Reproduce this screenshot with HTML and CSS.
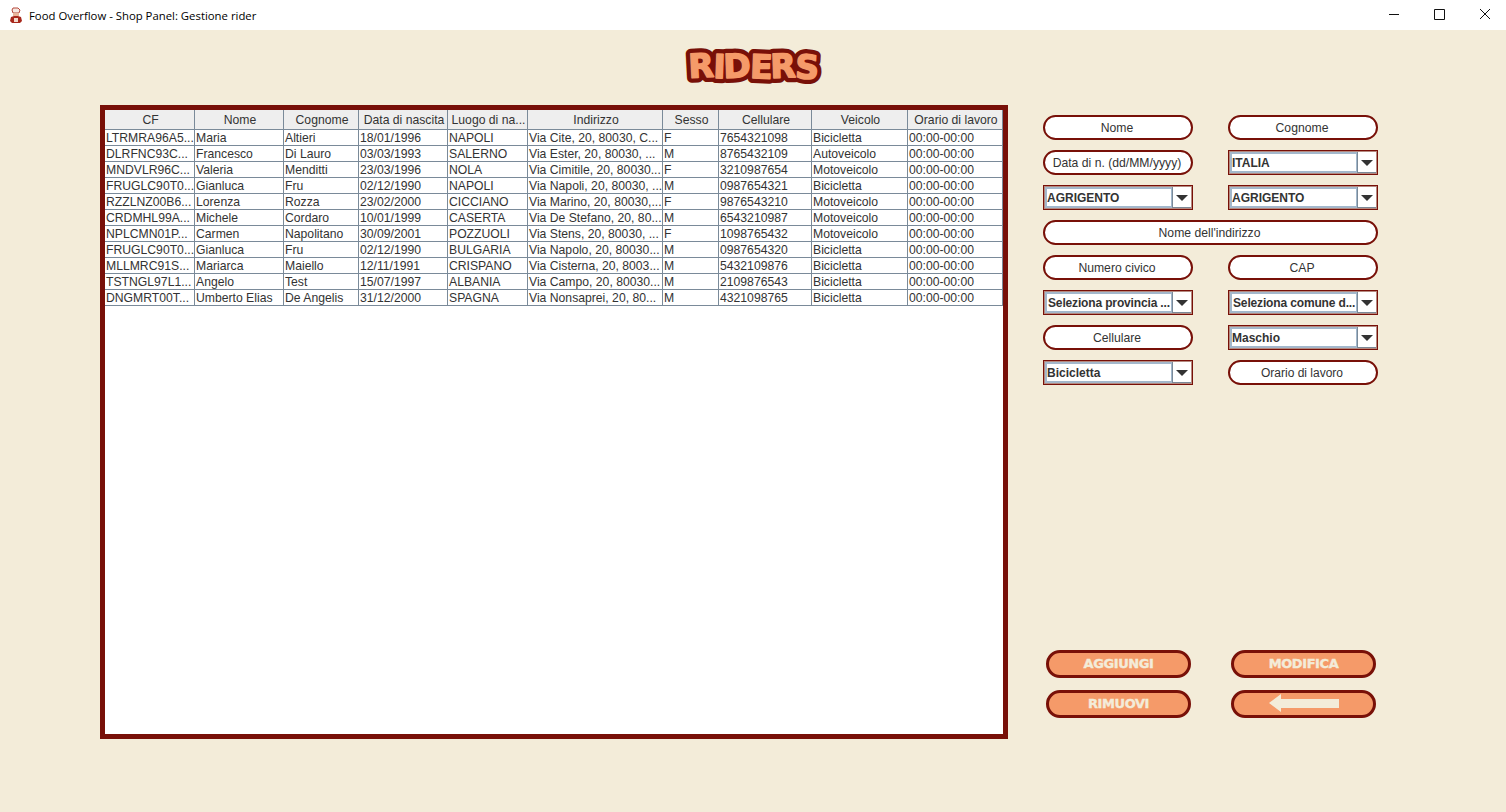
FILE: index.html
```html
<!DOCTYPE html>
<html lang="en">
<head>
    <meta charset="UTF-8">
    <title>Food Overflow - Shop Panel: Gestione rider</title>
    <link rel="stylesheet" href="styles.css">
</head>
<body>
<div class="titlebar">
    <svg class="app-icon" width="14" height="17" viewBox="0 0 14 17">
        <path d="M4 1h5l2 2-1 3H4L3 3z" fill="#f6e8e2" stroke="#b5483a" stroke-width="1"/>
        <path d="M4 6h6v3H4z" fill="#e9b59a"/>
        <path d="M2 10l3-1h4l3 1 1 4-2 2H3l-2-2z" fill="#a8281c"/>
        <path d="M5 11h4v4H5z" fill="#f2d9cc"/>
    </svg>
    <span class="app-title">Food Overflow - Shop Panel: Gestione rider</span>
    <div class="win-buttons">
        <svg width="46" height="30" viewBox="0 0 46 30"><path d="M21 14.500h10" stroke="#111" fill="none"/></svg>
        <svg width="46" height="30" viewBox="0 0 46 30"><path d="M20.500 9.500h10v10h-10z" stroke="#111" fill="none"/></svg>
        <svg width="46" height="30" viewBox="0 0 46 30"><path d="M20 9l10 10M30 9L20 19" stroke="#111" fill="none"/></svg>
    </div>
</div>

<div class="page">
    <div class="logo">
        <svg width="140" height="44" viewBox="0 0 140 44">
            <defs>
                <text id="logo-text" x="70" y="34" text-anchor="middle" rotate="-3 2 -2 2 -2 3">RIDERS</text>
            </defs>
            <use href="#logo-text" class="logo-back"/>
            <use href="#logo-text" class="logo-front"/>
        </svg>
    </div>
    <div class="main">
        <div class="table-panel">
            <table class="riders">
                <colgroup>
                    <col class="c-cf"><col class="c-nome"><col class="c-cognome"><col class="c-data"><col class="c-luogo">
                    <col class="c-ind"><col class="c-sesso"><col class="c-cell"><col class="c-veicolo"><col class="c-orario">
                </colgroup>
                <thead>
                <tr><th>CF</th><th>Nome</th><th>Cognome</th><th>Data di nascita</th><th>Luogo di na...</th><th>Indirizzo</th><th>Sesso</th><th>Cellulare</th><th>Veicolo</th><th>Orario di lavoro</th></tr>
                </thead>
                <tbody>
                <tr><td>LTRMRA96A5...</td><td>Maria</td><td>Altieri</td><td>18/01/1996</td><td>NAPOLI</td><td>Via Cite, 20, 80030, C...</td><td>F</td><td>7654321098</td><td>Bicicletta</td><td>00:00-00:00</td></tr>
                <tr><td>DLRFNC93C...</td><td>Francesco</td><td>Di Lauro</td><td>03/03/1993</td><td>SALERNO</td><td>Via Ester, 20, 80030, ...</td><td>M</td><td>8765432109</td><td>Autoveicolo</td><td>00:00-00:00</td></tr>
                <tr><td>MNDVLR96C...</td><td>Valeria</td><td>Menditti</td><td>23/03/1996</td><td>NOLA</td><td>Via Cimitile, 20, 80030...</td><td>F</td><td>3210987654</td><td>Motoveicolo</td><td>00:00-00:00</td></tr>
                <tr><td>FRUGLC90T0...</td><td>Gianluca</td><td>Fru</td><td>02/12/1990</td><td>NAPOLI</td><td>Via Napoli, 20, 80030, ...</td><td>M</td><td>0987654321</td><td>Bicicletta</td><td>00:00-00:00</td></tr>
                <tr><td>RZZLNZ00B6...</td><td>Lorenza</td><td>Rozza</td><td>23/02/2000</td><td>CICCIANO</td><td>Via Marino, 20, 80030,...</td><td>F</td><td>9876543210</td><td>Motoveicolo</td><td>00:00-00:00</td></tr>
                <tr><td>CRDMHL99A...</td><td>Michele</td><td>Cordaro</td><td>10/01/1999</td><td>CASERTA</td><td>Via De Stefano, 20, 80...</td><td>M</td><td>6543210987</td><td>Motoveicolo</td><td>00:00-00:00</td></tr>
                <tr><td>NPLCMN01P...</td><td>Carmen</td><td>Napolitano</td><td>30/09/2001</td><td>POZZUOLI</td><td>Via Stens, 20, 80030, ...</td><td>F</td><td>1098765432</td><td>Motoveicolo</td><td>00:00-00:00</td></tr>
                <tr><td>FRUGLC90T0...</td><td>Gianluca</td><td>Fru</td><td>02/12/1990</td><td>BULGARIA</td><td>Via Napolo, 20, 80030...</td><td>M</td><td>0987654320</td><td>Bicicletta</td><td>00:00-00:00</td></tr>
                <tr><td>MLLMRC91S...</td><td>Mariarca</td><td>Maiello</td><td>12/11/1991</td><td>CRISPANO</td><td>Via Cisterna, 20, 8003...</td><td>M</td><td>5432109876</td><td>Bicicletta</td><td>00:00-00:00</td></tr>
                <tr><td>TSTNGL97L1...</td><td>Angelo</td><td>Test</td><td>15/07/1997</td><td>ALBANIA</td><td>Via Campo, 20, 80030...</td><td>M</td><td>2109876543</td><td>Bicicletta</td><td>00:00-00:00</td></tr>
                <tr><td>DNGMRT00T...</td><td>Umberto Elias</td><td>De Angelis</td><td>31/12/2000</td><td>SPAGNA</td><td>Via Nonsaprei, 20, 80...</td><td>M</td><td>4321098765</td><td>Bicicletta</td><td>00:00-00:00</td></tr>
                </tbody>
            </table>
        </div>

        <div class="side">
            <div class="form">
                <div class="field">Nome</div>
                <div class="field">Cognome</div>
                <div class="field">Data di n. (dd/MM/yyyy)</div>
                <div class="combo"><span class="combo-val">ITALIA</span><span class="combo-btn"></span></div>
                <div class="combo"><span class="combo-val">AGRIGENTO</span><span class="combo-btn"></span></div>
                <div class="combo"><span class="combo-val">AGRIGENTO</span><span class="combo-btn"></span></div>
                <div class="field wide">Nome dell'indirizzo</div>
                <div class="field">Numero civico</div>
                <div class="field">CAP</div>
                <div class="combo"><span class="combo-val sel">Seleziona provincia ...</span><span class="combo-btn"></span></div>
                <div class="combo"><span class="combo-val sel">Seleziona comune d...</span><span class="combo-btn"></span></div>
                <div class="field">Cellulare</div>
                <div class="combo"><span class="combo-val">Maschio</span><span class="combo-btn"></span></div>
                <div class="combo"><span class="combo-val">Bicicletta</span><span class="combo-btn"></span></div>
                <div class="field small">Orario di lavoro</div>
            </div>
            <div class="actions">
                <button class="btn">AGGIUNGI</button>
                <button class="btn">MODIFICA</button>
                <button class="btn">RIMUOVI</button>
                <button class="btn">
                    <svg width="70" height="20" viewBox="0 0 70 20"><path d="M0 10l12-9v5h58v9H12v4z" fill="#f3ecd9"/></svg>
                </button>
            </div>
        </div>
    </div>
</div>
</body>
</html>
```

FILE: styles.css
```css
*{
    margin: 0;
    padding: 0;
    box-sizing: border-box;
}
html,body{
    height: 100%;
}
body{
    background: #f3ecd9;
    font-family: "Liberation Sans", Arial, sans-serif;
    font-size: 12.2px;
    color: #333333;
    overflow: hidden;
}
/* title bar */
.titlebar{
    height: 30px;
    background: #ffffff;
    display: flex;
    align-items: center;
    padding-left: 9px;
}
.app-title{
    margin-left: 6px;
    font-family: "Open Sans", "Noto Sans", sans-serif;
    font-size: 11.35px;
    color: #000000;
}
.win-buttons{
    margin-left: auto;
    display: flex;
}
.win-buttons svg{
    display: block;
}
/* page */
.page{
    padding: 0 100px;
}
.logo{
    height: 75px;
    padding-top: 14px;
    display: flex;
    justify-content: center;
}
.logo svg{
    display: block;
}
.logo text{
    font-family: "DejaVu Sans", sans-serif;
    font-size: 33px;
    font-weight: bold;
    letter-spacing: -1.5px;
}
.logo-back{
    fill: #781008;
    stroke: #781008;
    stroke-width: 10px;
    stroke-linejoin: round;
}
.logo-front{
    fill: #f59a69;
    stroke: #f59a69;
    stroke-width: 1.5px;
    stroke-linejoin: round;
}
.main{
    display: flex;
    gap: 35px;
}
.table-panel{
    width: 908px;
    height: 634px;
    border: 5px solid #781008;
    background: #ffffff;
}
/* table */
.riders{
    table-layout: fixed;
    border-collapse: separate;
    border-spacing: 0;
    width: 898px;
}
.c-cf{width: 90px;}
.c-nome{width: 89px;}
.c-cognome{width: 75px;}
.c-data{width: 89px;}
.c-luogo{width: 80px;}
.c-ind{width: 135px;}
.c-sesso{width: 56px;}
.c-cell{width: 93px;}
.c-veicolo{width: 96px;}
.c-orario{width: 95px;}
.riders th{
    height: 20px;
    background: #eeeeee;
    font-weight: normal;
    text-align: center;
    padding: 2px 0 0 2px;
    line-height: 17px;
    border-right: 1px solid #7a8a99;
    border-bottom: 1px solid #7a8a99;
    white-space: nowrap;
    overflow: hidden;
}
.riders td{
    height: 16px;
    padding: 2px 0 0 1px;
    line-height: 13px;
    border-right: 1px solid #7a8a99;
    border-bottom: 1px solid #7a8a99;
    white-space: nowrap;
    overflow: hidden;
}
/* right column */
.side{
    width: 335px;
    height: 634px;
    display: flex;
    flex-direction: column;
    justify-content: space-between;
    padding-top: 10px;
    padding-bottom: 21px;
}
.form{
    display: grid;
    grid-template-columns: 150px 150px;
    grid-auto-rows: 25px;
    column-gap: 35px;
    row-gap: 10px;
}
.field{
    background: #ffffff;
    border: 2px solid #781008;
    border-radius: 13px;
    padding-right: 2px;
    text-align: center;
    line-height: 23px;
}
.field.wide{
    grid-column: 1 / 3;
}
.field.small{
    font-size: 12px;
}
.combo{
    display: flex;
    background: #b58a80;
    border: 1px solid #781008;
    padding: 1px;
}
.combo-val{
    flex: 1;
    min-width: 0;
    background: #ffffff;
    border: 2px solid #a3b8cc;
    border-right-width: 1px;
    font-size: 12px;
    font-weight: bold;
    line-height: 19px;
    white-space: nowrap;
    overflow: hidden;
}
.combo-val.sel{
    padding-left: 1px;
    letter-spacing: -0.15px;
}
.combo-btn{
    width: 19px;
    background: #ffffff;
    border-left: 1px solid #7a8a99;
    border-bottom: 1px solid #7a8a99;
    position: relative;
}
.combo-btn::after{
    content: "";
    position: absolute;
    left: 3px;
    top: 8px;
    border-left: 6px solid transparent;
    border-right: 6px solid transparent;
    border-top: 6px solid #333333;
}
.actions{
    display: grid;
    grid-template-columns: 145px 145px;
    grid-auto-rows: 28px;
    column-gap: 40px;
    row-gap: 12px;
    padding-left: 3px;
}
.btn{
    background: #f59a69;
    border: 3px solid #781008;
    border-radius: 14px;
    padding-bottom: 2px;
    color: #f3ecd9;
    font-family: "DejaVu Sans", sans-serif;
    font-size: 13px;
    font-weight: bold;
    letter-spacing: -0.4px;
    -webkit-text-stroke: 0.4px #f3ecd9;
    display: flex;
    align-items: center;
    justify-content: center;
}
```
